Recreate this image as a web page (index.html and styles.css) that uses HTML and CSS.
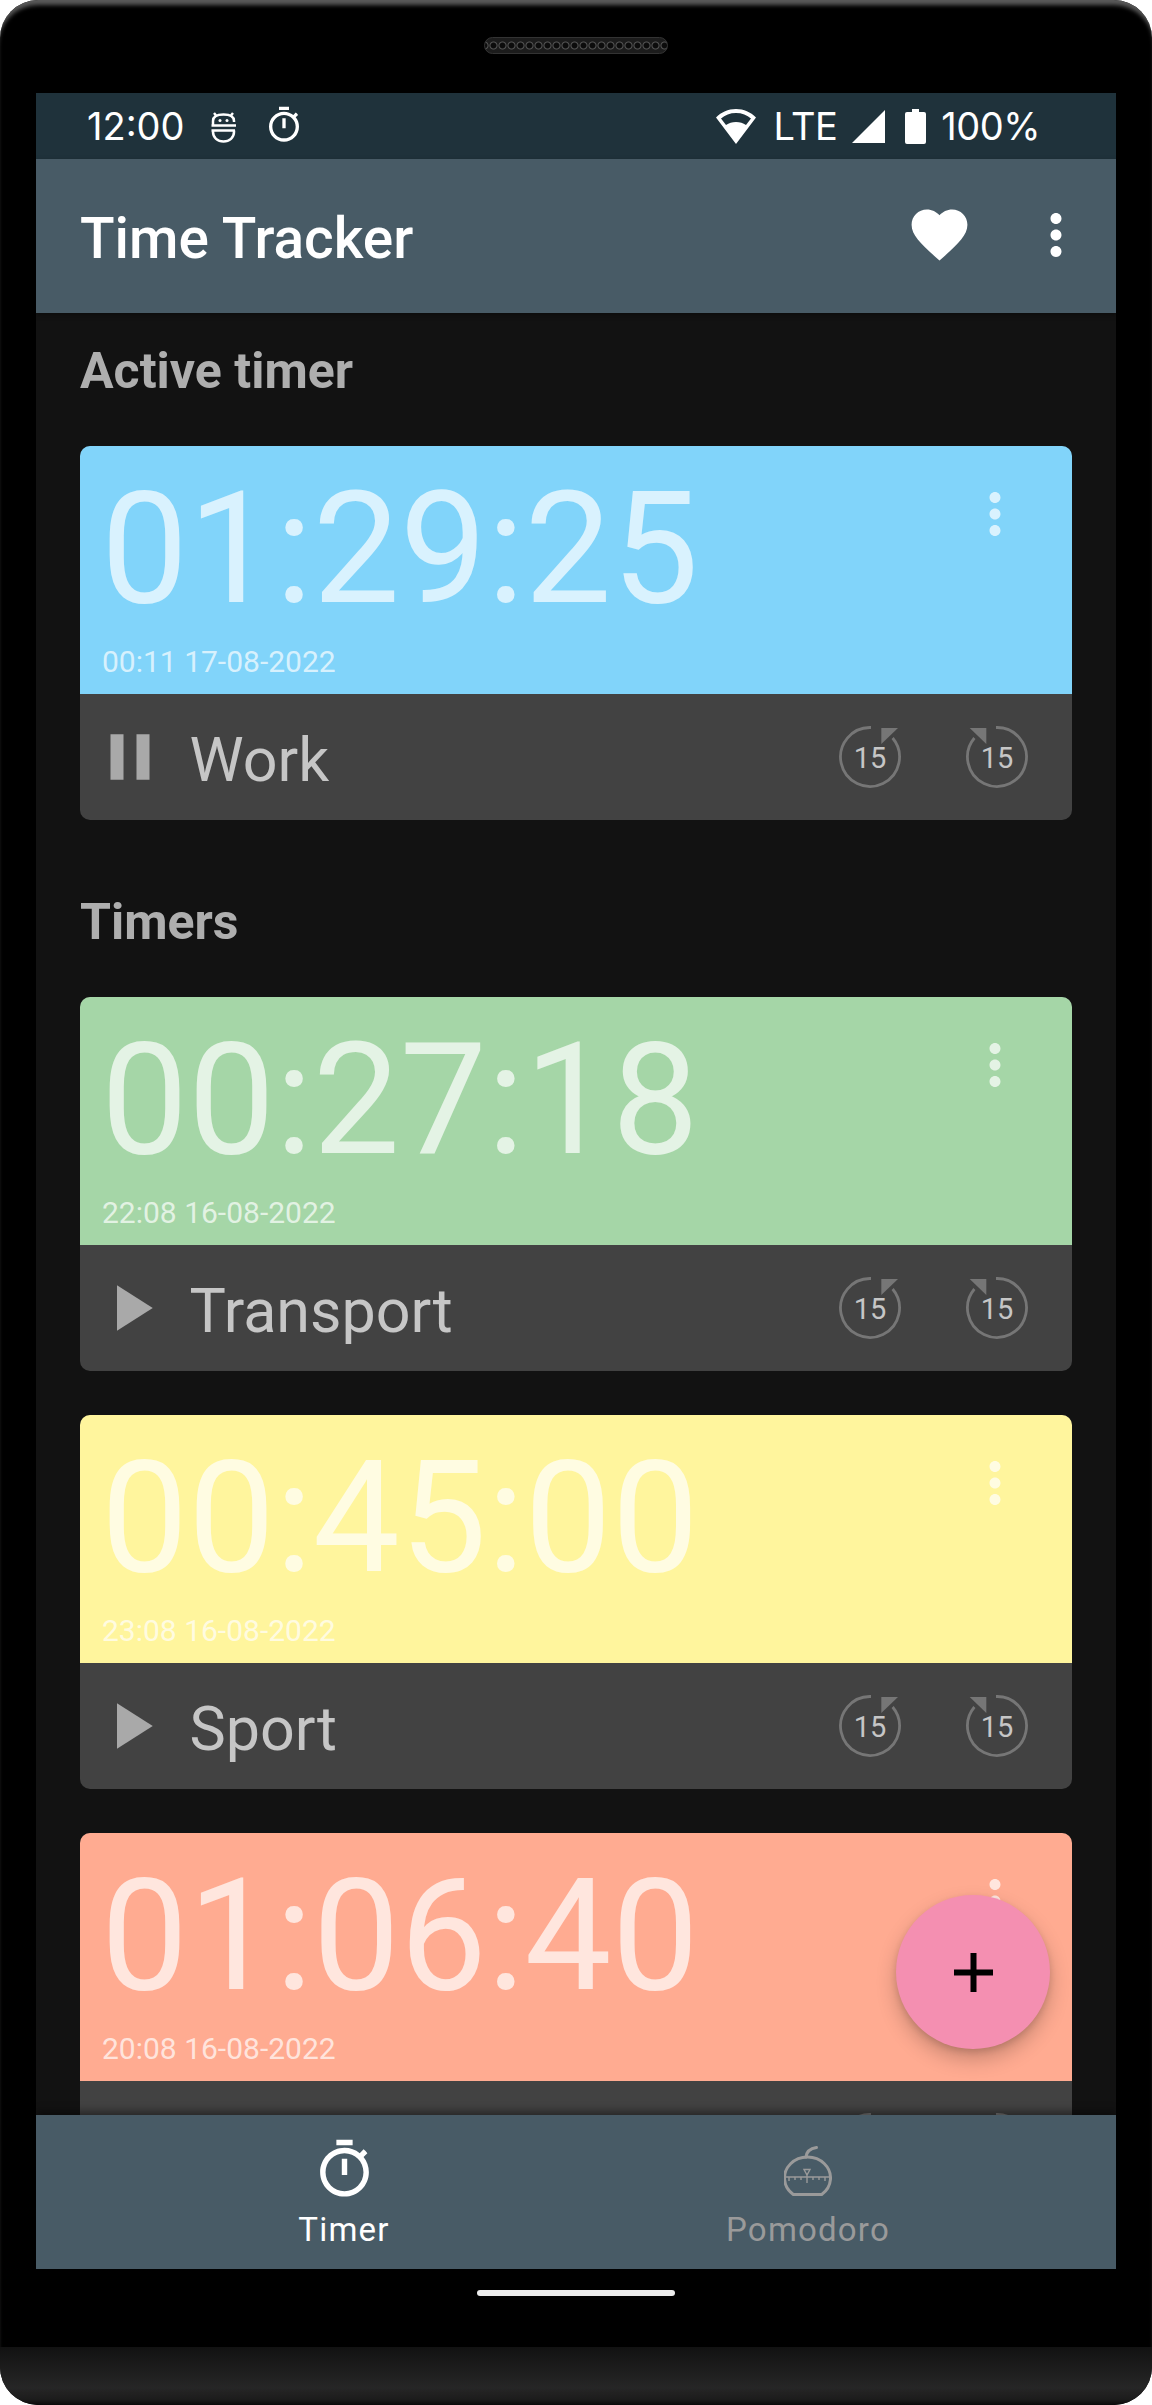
FILE: index.html
```html
<!DOCTYPE html>
<html lang="en">
<head>
<meta charset="utf-8">
<title>Time Tracker</title>
<link rel="stylesheet" href="styles.css">
</head>
<body>
<svg class="defs" aria-hidden="true">
  <symbol id="more" viewBox="0 0 24 24"><path d="M12 8c1.100 0 2-.9 2-2s-.9-2-2-2-2 .9-2 2 .9 2 2 2zm0 2c-1.100 0-2 .9-2 2s.9 2 2 2 2-.9 2-2-.9-2-2-2zm0 6c-1.100 0-2 .9-2 2s.9 2 2 2 2-.9 2-2-.9-2-2-2z"/></symbol>
  <symbol id="pause" viewBox="0 0 24 24"><path d="M6 19h4V5H6v14zm8-14v14h4V5h-4z"/></symbol>
  <symbol id="play" viewBox="0 0 24 24"><path d="M8 5v14l11-7z"/></symbol>
  <symbol id="timer" viewBox="0 0 24 24"><path d="M15 1H9v2h6V1zm-4 13h2V8h-2v6zm8.030-6.610l1.420-1.420c-.43-.51-.9-.99-1.410-1.410l-1.420 1.420C16.070 4.740 14.120 4 12 4c-4.970 0-9 4.030-9 9s4.020 9 9 9 9-4.030 9-9c0-2.120-.74-4.070-1.970-5.610zM12 20c-3.870 0-7-3.130-7-7s3.130-7 7-7 7 3.130 7 7-3.130 7-7 7z"/></symbol>
  <symbol id="back15" viewBox="0 0 66 66">
    <path class="ring" d="M34 3.500A29.500 29.500 0 1 0 55.600 14"/>
    <path class="tip" d="M44.300 4H61L44.300 20z"/>
  </symbol>
  <symbol id="fwd15" viewBox="0 0 66 66">
    <path class="ring" d="M32 3.500A29.500 29.500 0 1 1 10.400 14"/>
    <path class="tip" d="M5.700 4H22.300V20z"/>
  </symbol>
</svg>

<div class="device">
  <div class="bezel-top"><div class="speaker"></div></div>

  <div class="screen">
    <div class="statusbar">
      <div class="status-group">
        <span class="clock">12:00</span>
        <svg class="ic-robot" viewBox="0 0 27 33"><path d="M4 3l2.500 3M23 3l-2.500 3M3 15.500V11C3 6.500 7.500 4.500 13.500 4.500S24 6.500 24 11v1M1.500 15.500H26M1.500 20.500H25M24 20.500V22c0 5.500-4.500 9.500-10.500 9.500S3 27.500 3 22v-2"/><circle cx="10" cy="10.500" r="1.500"/><circle cx="17" cy="10.500" r="1.500"/></svg>
        <svg class="ic-status-timer"><use href="#timer"/></svg>
      </div>
      <div class="status-group status-right">
        <svg class="ic-wifi" viewBox="0 0 40 35"><path fill-rule="evenodd" d="M20 0C12 0 5.500 3 0 8.500L20 35 40 8.500C34.500 3 28 0 20 0zM20 4c6 0 11 2 15 5.500l-5 6.500c-3-2-6-3-10-3s-7 1-10 3L5 9.500C9 6 14 4 20 4z"/></svg>
        <span class="lte">LTE</span>
        <svg class="ic-signal" viewBox="0 0 33 33"><path d="M33 0V33H0z"/></svg>
        <svg class="ic-battery" viewBox="0 0 21 35"><path d="M7 0h7v3h5a2 2 0 0 1 2 2v28a2 2 0 0 1-2 2H2a2 2 0 0 1-2-2V5a2 2 0 0 1 2-2h5z"/></svg>
        <span class="pct">100%</span>
      </div>
    </div>

    <header class="appbar">
      <h1 class="app-title">Time Tracker</h1>
      <div class="app-actions">
        <svg class="ic-heart" viewBox="0 0 24 24"><path d="M12 21.350l-1.450-1.320C5.400 15.360 2 12.280 2 8.500 2 5.420 4.420 3 7.500 3c1.740 0 3.410.81 4.500 2.090C13.090 3.810 14.760 3 16.500 3 19.580 3 22 5.420 22 8.500c0 3.780-3.400 6.860-8.550 11.540L12 21.350z"/></svg>
        <svg class="ic-appmore"><use href="#more"/></svg>
      </div>
    </header>

    <main class="content">
      <h2 class="section-title">Active timer</h2>
      <article class="card">
        <div class="card-top blue">
          <div class="time-col">
            <div class="time">01:29:25</div>
            <div class="started">00:11 17-08-2022</div>
          </div>
          <svg class="ic-cardmore"><use href="#more"/></svg>
        </div>
        <div class="card-foot">
          <svg class="ic-toggle"><use href="#pause"/></svg>
          <span class="name">Work</span>
          <div class="skips">
            <svg class="ic-skip" viewBox="0 0 66 66"><use href="#back15"/><text class="num" x="33" y="44">15</text></svg>
            <svg class="ic-skip" viewBox="0 0 66 66"><use href="#fwd15"/><text class="num" x="33" y="44">15</text></svg>
          </div>
        </div>
      </article>

      <h2 class="section-title spaced">Timers</h2>
      <article class="card">
        <div class="card-top green">
          <div class="time-col">
            <div class="time">00:27:18</div>
            <div class="started">22:08 16-08-2022</div>
          </div>
          <svg class="ic-cardmore"><use href="#more"/></svg>
        </div>
        <div class="card-foot">
          <svg class="ic-toggle"><use href="#play"/></svg>
          <span class="name">Transport</span>
          <div class="skips">
            <svg class="ic-skip" viewBox="0 0 66 66"><use href="#back15"/><text class="num" x="33" y="44">15</text></svg>
            <svg class="ic-skip" viewBox="0 0 66 66"><use href="#fwd15"/><text class="num" x="33" y="44">15</text></svg>
          </div>
        </div>
      </article>

      <article class="card spaced">
        <div class="card-top yellow">
          <div class="time-col">
            <div class="time">00:45:00</div>
            <div class="started">23:08 16-08-2022</div>
          </div>
          <svg class="ic-cardmore"><use href="#more"/></svg>
        </div>
        <div class="card-foot">
          <svg class="ic-toggle"><use href="#play"/></svg>
          <span class="name">Sport</span>
          <div class="skips">
            <svg class="ic-skip" viewBox="0 0 66 66"><use href="#back15"/><text class="num" x="33" y="44">15</text></svg>
            <svg class="ic-skip" viewBox="0 0 66 66"><use href="#fwd15"/><text class="num" x="33" y="44">15</text></svg>
          </div>
        </div>
      </article>

      <article class="card spaced">
        <div class="card-top salmon">
          <div class="time-col">
            <div class="time">01:06:40</div>
            <div class="started">20:08 16-08-2022</div>
          </div>
          <svg class="ic-cardmore"><use href="#more"/></svg>
        </div>
        <div class="card-foot">
          <svg class="ic-toggle"><use href="#play"/></svg>
          <span class="name"></span>
          <div class="skips">
            <svg class="ic-skip" viewBox="0 0 66 66"><use href="#back15"/></svg>
            <svg class="ic-skip" viewBox="0 0 66 66"><use href="#fwd15"/></svg>
          </div>
        </div>
      </article>

      <button class="fab" aria-label="Add timer">
        <svg class="ic-plus" viewBox="0 0 39 39"><path d="M16.500 0h6v16.500H39v6H22.500V39h-6V22.500H0v-6h16.500z"/></svg>
      </button>
    </main>

    <nav class="bottomnav">
      <div class="nav-item active">
        <svg class="ic-nav-timer"><use href="#timer"/></svg>
        <span class="nav-label">Timer</span>
      </div>
      <div class="nav-item">
        <svg class="ic-pomodoro" viewBox="0 0 48 52">
          <path d="M22 13C22.500 8 26 4.500 32.500 3.500"/>
          <path d="M9.300 50.500A23 21 0 1 1 37.700 50.500z"/>
          <path class="thin" d="M1 33h45M5 33v4M11 33v3M17 33v3M23 31v8M29 33v3M35 33v3M41 33v4M20 25.500h6L23 31z"/>
        </svg>
        <span class="nav-label">Pomodoro</span>
      </div>
    </nav>
  </div>

  <div class="bezel-bottom"><div class="home-bar"></div></div>
  <div class="chin"></div>
</div>
</body>
</html>
```

FILE: styles.css
```css
* { box-sizing: border-box; }

html, body {
  margin: 0;
  padding: 0;
  background: #fff;
}

body {
  width: 1152px;
  height: 2405px;
  overflow: hidden;
  font-family: Roboto, "Liberation Sans", sans-serif;
}

.defs {
  position: absolute;
  width: 0;
  height: 0;
}

svg { display: block; flex: none; }

.device {
  width: 1152px;
  height: 2405px;
  display: flex;
  flex-direction: column;
  background: #000;
  border-radius: 38px;
  box-shadow: inset 0 7px 4px -2px #5a5a5a;
  overflow: hidden;
}

.bezel-top {
  height: 93px;
  padding-top: 37px;
  display: flex;
  justify-content: center;
  align-items: flex-start;
}

.speaker {
  width: 184px;
  height: 17px;
  border-radius: 9px;
  border: 1px solid #333;
  background: radial-gradient(circle at 50% 50%, #0c0c0c 0 2.500px, #555 3.500px, #1c1c1c 4.500px) 4px 0 / 9px 100% repeat-x #1c1c1c;
}

.screen {
  margin: 0 36px;
  height: 2176px;
  display: flex;
  flex-direction: column;
}

/* status bar */
.statusbar {
  height: 66px;
  flex: none;
  background: #1f323b;
  color: #fff;
  display: flex;
  justify-content: space-between;
  align-items: center;
  padding: 0 76px 0 51px;
  font-family: Inter, Roboto, sans-serif;
  font-size: 38px;
}

.status-group {
  display: flex;
  align-items: center;
}

.clock { width: 123px; }

.ic-robot {
  width: 27px;
  height: 33px;
  fill: #fff;
  stroke: #fff;
  stroke-width: 2.500;
}
.ic-robot path { fill: none; }
.ic-robot circle { stroke: none; }

.ic-status-timer {
  width: 40px;
  height: 40px;
  margin: -3px 0 0 27px;
  fill: #fff;
}

.ic-wifi { width: 40px; height: 35px; fill: #fff; }
.lte { margin-left: 18px; letter-spacing: -0.5px; }
.ic-signal { width: 33px; height: 33px; margin-left: 15px; fill: #fff; }
.ic-battery { width: 21px; height: 35px; margin-left: 20px; fill: #fff; }
.pct { margin-left: 15px; letter-spacing: -0.5px; }

/* app bar */
.appbar {
  height: 154px;
  flex: none;
  background: #485b66;
  display: flex;
  justify-content: space-between;
  align-items: center;
  padding: 0 27px 0 44px;
  position: relative;
  z-index: 2;
  box-shadow: 0 2px 5px rgba(0, 0, 0, .35);
}

.app-title {
  margin: 4px 0 0;
  color: #fff;
  font-size: 56.800px;
  font-weight: 500;
}

.app-actions {
  display: flex;
  align-items: center;
  gap: 50px;
  margin-top: -3px;
}

.ic-heart { width: 67px; height: 67px; fill: #fff; }
.ic-appmore { width: 66px; height: 66px; fill: #fff; }

/* scrolling content */
.content {
  flex: 1;
  min-height: 0;
  overflow: hidden;
  position: relative;
  background: #121212;
  padding: 0 44px;
}

.section-title {
  margin: 0 0 17px;
  height: 116px;
  line-height: 116px;
  font-size: 50px;
  font-weight: 700;
  color: #aeaeae;
}

.section-title.spaced { margin-top: 44px; }

.card {
  border-radius: 10px;
  overflow: hidden;
  background: #424242;
}

.card.spaced { margin-top: 44px; }

.card-top {
  height: 248px;
  display: flex;
  justify-content: space-between;
  align-items: flex-start;
  color: rgba(255, 255, 255, .7);
  padding: 0 44px 0 21px;
}

.blue { background: #81d4fa; }
.green { background: #a5d6a7; }
.yellow { background: #fff59d; }
.salmon { background: #ffab91; }

.time-col {
  display: flex;
  flex-direction: column;
}

.time {
  font-size: 155px;
  line-height: 184px;
  height: 184px;
  margin-top: 11px;
}

.started {
  font-size: 30px;
  line-height: 36px;
  margin: 3px 0 0 1px;
}

.ic-cardmore {
  width: 66px;
  height: 66px;
  margin-top: 35px;
  fill: rgba(255, 255, 255, .7);
}

.card-foot {
  height: 126px;
  display: flex;
  align-items: center;
  padding: 0 42px 0 10.500px;
}

.ic-toggle {
  width: 78px;
  height: 78px;
  fill: #a9a9a9;
}

.name {
  margin: 6px 0 0 21px;
  font-size: 61px;
  color: #c6c6c6;
  flex: 1;
}

.skips {
  display: flex;
  gap: 61px;
}

.ic-skip { width: 66px; height: 66px; }
.ring { fill: none; stroke: #767676; stroke-width: 2.800; }
.tip { fill: #767676; }
.num {
  fill: #c6c6c6;
  font-family: Roboto, sans-serif;
  font-size: 29px;
  text-anchor: middle;
}

/* floating button */
.fab {
  position: absolute;
  right: 66px;
  bottom: 66px;
  width: 154px;
  height: 154px;
  border: 0;
  border-radius: 50%;
  background: #f48fb1;
  display: flex;
  align-items: center;
  justify-content: center;
  box-shadow: 0 10px 20px rgba(0, 0, 0, .22), 0 3px 6px rgba(0, 0, 0, .12);
}

.ic-plus { width: 39px; height: 39px; fill: #000; }

/* bottom navigation */
.bottomnav {
  height: 154px;
  flex: none;
  background: #485b66;
  display: flex;
  justify-content: center;
  position: relative;
  z-index: 2;
  box-shadow: 0 -4px 8px rgba(0, 0, 0, .4);
}

.nav-item {
  width: 464px;
  display: flex;
  flex-direction: column;
  align-items: center;
  justify-content: flex-end;
  padding-bottom: 19px;
  color: #9a9a9a;
}

.nav-item.active { color: #fff; }

.nav-label {
  font-size: 33px;
  line-height: 40px;
  letter-spacing: 1.200px;
  margin-top: 3px;
}

.ic-nav-timer {
  width: 65px;
  height: 65px;
  margin-bottom: 5px;
  fill: #fff;
}

.ic-pomodoro {
  width: 48px;
  height: 52px;
  margin-bottom: 11px;
  fill: none;
  stroke: #9a9a9a;
  stroke-width: 3;
  stroke-linecap: round;
}
.ic-pomodoro .thin { stroke-width: 1.400; stroke-linecap: butt; }

/* bottom bezel */
.bezel-bottom {
  height: 78px;
  flex: none;
  display: flex;
  justify-content: center;
  padding-top: 21px;
}

.home-bar {
  width: 198px;
  height: 6px;
  border-radius: 3px;
  background: #ececec;
}

.chin {
  flex: 1;
  background: linear-gradient(#121212 0, #262626 70%, #1c1c1c 90%, #0a0a0a 100%);
}
```
